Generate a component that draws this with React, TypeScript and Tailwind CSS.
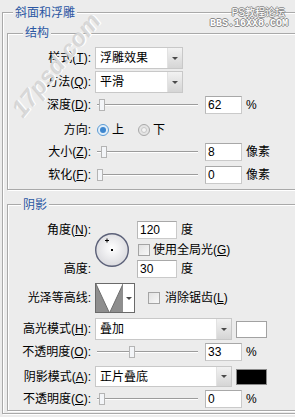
import React from 'react';

const Label = ({ children }: { children: React.ReactNode }) => (
  <span className="w-[83px] shrink-0 text-right whitespace-nowrap">{children}</span>
);

const Field = ({ value, unit, className }: { value: string; unit: string; className: string }) => (
  <div className="flex items-center">
    <div className={`h-[18px] bg-white border border-[#cacaca] border-t-[#a8a8a8] border-l-[#b8b8b8] pl-[2px] leading-[16px] ${className}`}>
      {value}
    </div>
    <span className="ml-[4px]">{unit}</span>
  </div>
);

const Slider = ({ thumb }: { thumb: string }) => (
  <div className="relative w-[106px] h-[20px] shrink-0">
    <div className="absolute left-[2px] right-[3px] top-[9px] h-[2px] border-t border-[#9c9c9c] border-b border-b-white" />
    <div className={`absolute top-[4px] w-[6px] h-[12px] border border-[#b4b4b4] bg-[#f3f5f8] ${thumb}`} />
  </div>
);

const Arrow = () => (
  <div className="w-0 h-0 border-l-[3px] border-r-[3px] border-t-[3px] border-l-transparent border-r-transparent border-t-[#4a4a4a]" />
);

const Select = ({ value, className }: { value: string; className: string }) => (
  <div className={`flex h-full bg-white border border-[#c8c8c8] ${className}`}>
    <span className="flex-1 pl-[4px] self-center">{value}</span>
    <div className="w-[15px] flex items-center justify-center bg-linear-to-b from-[#f2f2f2] to-[#d5d5d5] border-l border-[#e2e2e2]">
      <Arrow />
    </div>
  </div>
);

const Checkbox = () => (
  <span className="block w-[12px] h-[12px] shrink-0 border border-[#a4a4a4] bg-linear-to-br from-[#e2e2e2] to-[#f8f8f8]" />
);

const Legend = ({ children, className }: { children: React.ReactNode; className: string }) => (
  <span className={`absolute px-[2px] bg-[#ececec] text-[#2b57a3] ${className}`}>{children}</span>
);

export default function App() {
  return (
    <div className="relative w-[295px] h-[417px] overflow-hidden bg-[#ececec] font-['Liberation_Sans','Noto_Sans_CJK_SC',sans-serif] text-[12px] leading-[14px] text-black">
      <div className="relative ml-[2px] mt-[12px] w-[320px] h-[402px] border border-[#a9a9a9] shadow-[inset_1px_1px_0_#fff,1px_1px_0_#fff]">
        <Legend className="-top-[7px] left-[10px]">斜面和浮雕</Legend>

        {/* 结构 */}
        <div className="relative ml-[4px] mt-[20px] h-[157px] border border-[#a9a9a9] shadow-[inset_1px_1px_0_#fff,1px_1px_0_#fff] pt-[13px]">
          <Legend className="-top-[8px] left-[15px]">结构</Legend>

          <div className="flex items-center gap-[4px] h-[22px]">
            <Label>样式(<u>T</u>):</Label>
            <Select value="浮雕效果" className="w-[88px]" />
          </div>
          <div className="flex items-center gap-[4px] h-[22px] mt-[2px]">
            <Label>方法(<u>Q</u>):</Label>
            <Select value="平滑" className="w-[88px]" />
          </div>
          <div className="flex items-center gap-[4px] h-[20px] mt-[2px]">
            <Label>深度(<u>D</u>):</Label>
            <Slider thumb="left-[4px]" />
            <Field value="62" unit="%" className="w-[37px]" />
          </div>
          <div className="flex items-center gap-[4px] h-[20px] mt-[5px]">
            <Label>方向:</Label>
            <div className="flex items-center">
              <span className="ml-[2px] w-[12px] h-[12px] rounded-full border border-[#5b9bd5] bg-[#e1eef9] flex items-center justify-center">
                <span className="w-[6px] h-[6px] rounded-full bg-[#3d86cf]" />
              </span>
              <span className="ml-[3px]">上</span>
              <span className="ml-[14px] w-[12px] h-[12px] rounded-full border border-[#a8a8a8] bg-[#e4e4e4] flex items-center justify-center">
                <span className="w-[6px] h-[6px] rounded-full bg-[#f4f4f4] border border-[#c8c8c8]" />
              </span>
              <span className="ml-[3px]">下</span>
            </div>
          </div>
          <div className="flex items-center gap-[4px] h-[20px] mt-[2px]">
            <Label>大小(<u>Z</u>):</Label>
            <Slider thumb="left-[6px]" />
            <Field value="8" unit="像素" className="w-[37px]" />
          </div>
          <div className="flex items-center gap-[4px] h-[20px] mt-[3px]">
            <Label>软化(<u>F</u>):</Label>
            <Slider thumb="left-[2px]" />
            <Field value="0" unit="像素" className="w-[37px]" />
          </div>
        </div>

        {/* 阴影 */}
        <div className="relative ml-[4px] mt-[14px] h-[207px] border border-[#a9a9a9] shadow-[inset_1px_1px_0_#fff,1px_1px_0_#fff] pt-[15px]">
          <Legend className="-top-[7px] left-[13px]">阴影</Legend>

          <div className="grid grid-cols-[83px_38px_1fr] grid-rows-[20px_19px_20px] gap-x-[4px]">
            <span className="text-right self-center whitespace-nowrap">角度(<u>N</u>):</span>
            <div className="row-span-3 flex items-center">
              <svg width="38" height="38" viewBox="0 0 38 38">
                <defs>
                  <radialGradient id="dialFill" cx="50%" cy="45%" r="55%">
                    <stop offset="0" stopColor="#ffffff" />
                    <stop offset="1" stopColor="#dadade" />
                  </radialGradient>
                </defs>
                <circle cx="17" cy="19" r="16.3" fill="url(#dialFill)" stroke="#5b6078" strokeWidth="1.4" />
                <path d="M12 7.5v4M10 9.5h4" stroke="#000" strokeWidth="1" />
                <rect x="16" y="18" width="2" height="2" fill="#000" />
              </svg>
            </div>
            <div className="flex items-center">
              <Field value="120" unit="度" className="w-[40px]" />
            </div>
            <div className="col-start-3 flex items-center">
              <span className="ml-[1px]"><Checkbox /></span>
              <span className="ml-[3px] whitespace-nowrap">使用全局光(<u>G</u>)</span>
            </div>
            <span className="text-right self-center">高度:</span>
            <div className="flex items-center">
              <Field value="30" unit="度" className="w-[40px]" />
            </div>
          </div>

          <div className="flex items-center gap-[4px] h-[30px] mt-[4px]">
            <Label>光泽等高线:</Label>
            <div className="flex w-[40px] h-[30px] shrink-0 border border-[#6a6a6a] bg-white">
              <svg width="27" height="28" viewBox="0 0 27 28" className="shrink-0">
                <rect width="27" height="28" fill="#8e8e8e" />
                <polygon points="0,0 27,0 14,28 13,28" fill="#ffffff" />
                <path d="M0 0 L13 28 M27 0 L14 28" stroke="#6e6e6e" strokeWidth="1" fill="none" />
              </svg>
              <div className="flex-1 flex items-center justify-center">
                <Arrow />
              </div>
            </div>
            <span className="ml-[9px] flex"><Checkbox /></span>
            <span className="ml-[1px] whitespace-nowrap">消除锯齿(<u>L</u>)</span>
          </div>

          <div className="flex items-center gap-[4px] h-[22px] mt-[5px]">
            <Label>高光模式(<u>H</u>):</Label>
            <Select value="叠加" className="w-[137px]" />
            <div className="w-[31px] h-[17px] bg-white border border-[#a2a2a2]" />
          </div>
          <div className="flex items-center gap-[4px] h-[20px] mt-[2px]">
            <Label>不透明度(<u>O</u>):</Label>
            <Slider thumb="left-[34px]" />
            <Field value="33" unit="%" className="w-[37px]" />
          </div>
          <div className="flex items-center gap-[4px] h-[21px] mt-[4px]">
            <Label>阴影模式(<u>A</u>):</Label>
            <Select value="正片叠底" className="w-[137px]" />
            <div className="w-[31px] h-[16px] bg-black border border-[#8a8a8a]" />
          </div>
          <div className="flex items-center gap-[4px] h-[20px] mt-[2px]">
            <Label>不透明度(<u>C</u>):</Label>
            <Slider thumb="left-[4px]" />
            <Field value="0" unit="%" className="w-[37px]" />
          </div>
        </div>
      </div>

      {/* watermarks */}
      <span className="absolute -left-[14px] top-[52px] w-[140px] text-center -rotate-[51deg] text-[24px] leading-[26px] font-bold italic text-[#c9c9c9]/70 [text-shadow:1px_1px_0_#fff]">
        17psd.com
      </span>
      <div className="absolute right-[7px] top-[7px] flex flex-col items-end text-white [text-shadow:1px_0_#8a8a8a,-1px_0_#8a8a8a,0_1px_#8a8a8a,0_-1px_#8a8a8a]">
        <span className="text-[10px] leading-[12px] mr-[3px]">PS教程论坛</span>
        <span className="font-['Liberation_Mono',monospace] text-[10px] leading-[10px] font-bold">BBS.16XX8.COM</span>
      </div>
    </div>
  );
}
